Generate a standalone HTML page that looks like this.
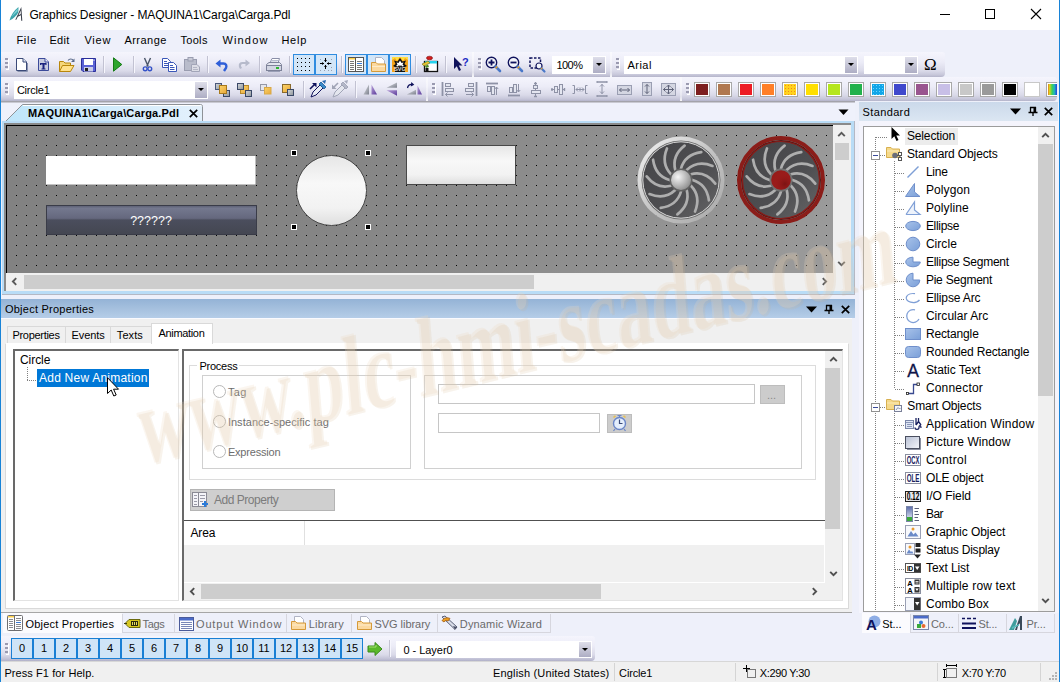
<!DOCTYPE html>
<html><head><meta charset="utf-8"><title>Graphics Designer</title>
<style>
*{box-sizing:border-box;margin:0;padding:0}
html,body{width:1061px;height:682px;overflow:hidden;background:#eef0fa;font-family:"Liberation Sans",sans-serif;font-size:11px;color:#000}
.a{position:absolute}
.t{position:absolute;white-space:nowrap;line-height:14px}
svg{position:absolute;overflow:visible}
#win{position:absolute;left:0;top:0;width:1061px;height:682px;background:#eef0fa;overflow:hidden}
#title{left:0;top:0;width:1061px;height:30px;background:#fff}
#menu{left:1px;top:30px;width:1060px;height:22px;background:#eef0fa}
.tb{background:linear-gradient(#f5f5fd 0%,#ececf7 40%,#dadae9 75%,#c6c6d9 92%,#b4b4ca 100%);border-radius:0 3px 4px 0}
.sep{position:absolute;width:2px;height:17px;background:linear-gradient(90deg,#c2c2d2 50%,#f6f6fd 50%)}
.grip{position:absolute;width:3px;height:11px;background:repeating-linear-gradient(#9a9ab0 0 2px,transparent 2px 4px);box-shadow:1px 1px 0 #fff}
.btnsel{position:absolute;width:22px;height:21px;background:#d3e6f8;border:1px solid #2f8ce0}
.combo{position:absolute;background:#fff;height:18px}
.dd{position:absolute;right:1px;top:1px;bottom:1px;width:12px;background:linear-gradient(#dedeea,#c6c6d6 50%,#adadc4)}
.dd:after{content:"";position:absolute;left:3px;top:6px;border:3px solid transparent;border-top:3.500px solid #000;border-bottom:0}
.sw{position:absolute;top:5px;width:16px;height:15px;border:1px solid #a8a8a8;background:#fff;padding:1px}
.sw i{display:block;width:100%;height:100%}
.ptab{background:#f0f0f0;border:1px solid #d9d9d9;border-bottom:0}
.pt{font-size:11px;letter-spacing:-0.35px}
.radio{width:13px;height:13px;border-radius:50%;border:1px solid #b8b8b8;background:#fff}
.rt{font-size:11px;color:#6d6d6d;letter-spacing:-0.1px}
.btab{border:1px solid #d6d6de;border-top:0;background:#eef0fa}
.bt{color:#6a6a6a}
.lb{width:22px;height:21px;border:1px solid #1a7fd4;background:#cfe4f7;text-align:center;font-size:11px;line-height:19px;font-weight:normal}
.ssep{width:1px;height:18px;background:#d4d4d4}
.tbdiv{width:2px;background:linear-gradient(rgba(255,255,255,.5),rgba(255,255,255,.35) 80%,rgba(255,255,255,.9))}
</style></head><body>
<div id="win">
<!-- TITLE BAR -->
<div id="title" class="a">
 <svg style="left:9px;top:6px" width="16" height="17" viewBox="0 0 16 17"><path d="M.5 14.500Q2.500 6.500 9.500 1L9.300 6.500Q6.500 11.500 .5 14.500Z" fill="#3aa3ab"/><path d="M2.500 11Q5 6 8.800 2.500L8.500 5.500Q5.500 8 2.500 11Z" fill="#7fd0d4"/><path d="M6.300 13.800L12.300 1L13.300 14.800L12.200 14.800L11.900 9.200L8.800 10.800L7.300 13.800ZM9.500 9.300L11.800 8L11.700 4.500Z" fill="#3a3f4a" fill-rule="evenodd"/></svg>
 <div class="t" style="letter-spacing:-0.1px;left:29.4px;top:8px;font-size:12px" id="ttl">Graphics Designer - MAQUINA1\Carga\Carga.Pdl</div>
 <svg style="left:930px;top:0" width="131" height="30" viewBox="0 0 131 30"><g stroke="#000" stroke-width="1" fill="none" shape-rendering="crispEdges"><path d="M10 14.5H20"/><rect x="55.5" y="9.5" width="9" height="9"/></g><path d="M101 9 L111 19 M111 9 L101 19" stroke="#000" stroke-width="1.1"/></svg>
</div>
<!-- MENU -->
<div id="menu" class="a" style="font-size:11px">
 <div class="t" style="letter-spacing:0.76px;left:15.4px;top:3px">File</div>
 <div class="t" style="letter-spacing:0.34px;left:48.4px;top:3px">Edit</div>
 <div class="t" style="letter-spacing:0.78px;left:83.4px;top:3px">View</div>
 <div class="t" style="letter-spacing:0.48px;left:123.4px;top:3px">Arrange</div>
 <div class="t" style="letter-spacing:0.33px;left:179.4px;top:3px">Tools</div>
 <div class="t" style="letter-spacing:1.18px;left:221.4px;top:3px">Window</div>
 <div class="t" style="letter-spacing:0.79px;left:280.4px;top:3px">Help</div>
</div>
<!-- TOOLBAR ROW 1 -->
<div class="a tb" style="left:1px;top:52px;width:944px;height:25px"></div>
<div class="a tbdiv" style="left:472px;top:52px;height:25px"></div>
<div class="a tbdiv" style="left:610px;top:52px;height:25px"></div>
<div class="a" style="left:0;top:52px;width:1061px;height:25px">
 <div class="grip" style="left:5px;top:6px"></div>
 <!-- new -->
 <svg style="left:14px;top:5px" width="16" height="16" viewBox="0 0 16 16"><path d="M2.5 1.5H9L12.5 5V13.5H2.5Z" fill="#fff" stroke="#3b4a78" stroke-width="1"/><path d="M9 1.5V5H12.5" fill="#dfe6f5" stroke="#3b4a78" stroke-width="1"/><path d="M3.5 14.5H13.5V6" fill="none" stroke="#8a93b0" stroke-width="1"/></svg>
 <!-- template -->
 <svg style="left:36px;top:5px" width="16" height="16" viewBox="0 0 16 16"><path d="M2.5 1.5H9L12.5 5V13.5H2.5Z" fill="#c9cde0" stroke="#3b4a9a" stroke-width="1"/><path d="M9 1.5V5H12.5" fill="#eef" stroke="#3b4a9a" stroke-width="1"/><path d="M4 6H10.500V8H9.500V7.500H8.500V11.500H9.500V12.500H5.500V11.500H6.500V7.500H5V8H4Z" fill="#1a237e"/></svg>
 <!-- open -->
 <svg style="left:58px;top:5px" width="17" height="16" viewBox="0 0 17 16"><path d="M1.5 14.5V4.5H5.5L7 6H12.5V8" fill="#f5d67a" stroke="#b8860b" stroke-width="1"/><path d="M1.5 14.5L4.5 8.5H16L12.5 14.5Z" fill="#ffe08a" stroke="#b8860b" stroke-width="1"/><path d="M10 3.5C11.5 1.5 14 1.5 15.5 3.5" fill="none" stroke="#5a6a8a" stroke-width="1.2"/><path d="M16.5 1.5V5H13Z" fill="#5a6a8a"/></svg>
 <!-- save -->
 <svg style="left:81px;top:5px" width="15" height="16" viewBox="0 0 15 16"><path d="M0.5 1.5H14.5V14.5H2L0.5 13Z" fill="#5b63d6" stroke="#2a2f9a" stroke-width="1"/><rect x="3" y="2" width="9" height="6" fill="#fff"/><rect x="3" y="10" width="9" height="4.5" fill="#c9cce8"/><rect x="4" y="11" width="3" height="3" fill="#222"/><rect x="12.5" y="2.5" width="1" height="1.5" fill="#dde"/></svg>
 <div class="sep" style="left:103px;top:4px"></div>
 <!-- play -->
 <svg style="left:112px;top:5px" width="12" height="16" viewBox="0 0 12 16"><path d="M1.500 .8L9.800 7.500L1.500 14.200Z" fill="#2ea52e" stroke="#157a15" stroke-width="1"/></svg>
 <div class="sep" style="left:133px;top:4px"></div>
 <!-- cut -->
 <svg style="left:141px;top:5px" width="13" height="16" viewBox="0 0 13 16"><path d="M3.500 1L7.200 9.500M9.500 1L5.800 9.500" stroke="#4a5568" stroke-width="1.400" fill="none"/><circle cx="4.200" cy="11.800" r="1.900" fill="none" stroke="#3452c8" stroke-width="1.400"/><circle cx="8.800" cy="11.800" r="1.900" fill="none" stroke="#3452c8" stroke-width="1.400"/></svg>
 <!-- copy -->
 <svg style="left:161px;top:5px" width="17" height="16" viewBox="0 0 17 16"><path d="M1.5 1.5H6.5L9.5 4.5V10.5H1.5Z" fill="#fff" stroke="#3b57b8" stroke-width="1"/><path d="M3 4.5H6M3 6.5H7.5M3 8.5H7.5" stroke="#3b57b8" stroke-width="1"/><path d="M7.5 5.5H12.5L15.5 8.5V14.5H7.5Z" fill="#fff" stroke="#3b57b8" stroke-width="1"/><path d="M9 8.5H12M9 10.5H13.5M9 12.5H13.5" stroke="#3b57b8" stroke-width="1"/></svg>
 <!-- paste (disabled) -->
 <svg style="left:184px;top:5px" width="17" height="16" viewBox="0 0 17 16"><rect x="0.5" y="2.5" width="12" height="11" fill="#b9bccb" stroke="#9a9db0"/><rect x="4" y="0.5" width="5" height="3.5" fill="#c8cad6" stroke="#9a9db0"/><path d="M7.5 7.5H13L15.5 10V14.5H7.5Z" fill="#dcdde6" stroke="#a2a5b8"/><path d="M9 10.5H13M9 12.5H14" stroke="#b4b6c6"/></svg>
 <div class="sep" style="left:207px;top:4px"></div>
 <!-- undo -->
 <svg style="left:214px;top:5px" width="16" height="16" viewBox="0 0 16 16"><path d="M4 6.5H9.5C12 6.5 13 8.5 12 11L10 14" fill="none" stroke="#2f5fd8" stroke-width="2.4"/><path d="M1.5 6.5L6.5 2.5V10.5Z" fill="#2f5fd8"/></svg>
 <!-- redo (disabled) -->
 <svg style="left:236px;top:5px" width="16" height="16" viewBox="0 0 16 16"><path d="M11 6H6.5C4.5 6 3.5 7.5 4 9.5L5 11.5" fill="none" stroke="#b6bacb" stroke-width="2.2"/><path d="M14 6L9.5 2.5V9.5Z" fill="#b6bacb"/></svg>
 <div class="sep" style="left:259px;top:4px"></div>
 <!-- print -->
 <svg style="left:266px;top:5px" width="16" height="16" viewBox="0 0 16 16"><path d="M4 6L6 1.5H13.5L12 6Z" fill="#fff" stroke="#8a8fa8"/><path d="M5.5 3.5H12M5 5H11.5" stroke="#b8bccf"/><path d="M0.5 7.5L3 5.5H13.5L15.5 7.5V12.5H0.5Z" fill="#e3e5ee" stroke="#7d8299"/><rect x="0.5" y="8.5" width="15" height="5" fill="#d2d5e2" stroke="#7d8299"/><rect x="10" y="10" width="3" height="2" fill="#2db52d"/><path d="M2 14.5H14" stroke="#9a9fb6"/></svg>
 <div class="sep" style="left:289px;top:4px"></div>
 <!-- grid (selected) -->
 <div class="btnsel" style="left:293px;top:2px"></div>
 <svg style="left:297px;top:6px" width="14" height="14" viewBox="0 0 14 14"><g fill="#000"><rect x="0" y="0" width="1" height="1"/><rect x="4" y="0" width="1" height="1"/><rect x="8" y="0" width="1" height="1"/><rect x="12" y="0" width="1" height="1"/><rect x="0" y="4" width="1" height="1"/><rect x="4" y="4" width="1" height="1"/><rect x="8" y="4" width="1" height="1"/><rect x="12" y="4" width="1" height="1"/><rect x="0" y="8" width="1" height="1"/><rect x="4" y="8" width="1" height="1"/><rect x="8" y="8" width="1" height="1"/><rect x="12" y="8" width="1" height="1"/><rect x="0" y="12" width="1" height="1"/><rect x="4" y="12" width="1" height="1"/><rect x="8" y="12" width="1" height="1"/><rect x="12" y="12" width="1" height="1"/></g></svg>
 <!-- snap (selected) -->
 <div class="btnsel" style="left:315px;top:2px"></div>
 <svg style="left:318px;top:5px" width="16" height="16" viewBox="0 0 16 16"><g fill="#98a0b0"><rect x="2" y="2" width="1" height="1"/><rect x="13" y="2" width="1" height="1"/><rect x="2" y="13" width="1" height="1"/><rect x="6" y="13" width="1" height="1"/><rect x="10" y="13" width="1" height="1"/><rect x="13" y="13" width="1" height="1"/><rect x="13" y="6" width="1" height="1"/><rect x="13" y="10" width="1" height="1"/></g><path d="M2 6.5H6M9 6.5H13M7.5 1V5M7.5 8V12" stroke="#000" stroke-width="1"/><path d="M4 5V8L6 6.5ZM11 5V8L9 6.5ZM6 3H9L7.5 5ZM6 10H9L7.5 8Z" fill="#000"/></svg>
 <div class="sep" style="left:341px;top:4px"></div>
 <!-- properties (selected) -->
 <div class="btnsel" style="left:345px;top:2px"></div>
 <svg style="left:348px;top:5px" width="16" height="15" viewBox="0 0 16 15"><rect x="0.5" y="0.5" width="15" height="14" fill="#fff" stroke="#555"/><path d="M7.5 0.5V14.5" stroke="#555"/><rect x="1" y="1" width="6" height="1.5" fill="#ffd24a"/><path d="M2 4.5H6M2 6.5H6M2 8.5H6M2 10.5H6M2 12.5H6M9 4.5H14M9 8.5H14M9 10.5H14M9 12.5H14" stroke="#777"/><path d="M9 6.5H14" stroke="#3a7bd5"/></svg>
 <!-- library (selected) -->
 <div class="btnsel" style="left:367px;top:2px"></div>
 <svg style="left:370px;top:4px" width="17" height="17" viewBox="0 0 17 17"><path d="M5.5 1.5H11.5L14.5 4.5V10.5H5.5Z" fill="#fff" stroke="#b0b4c4"/><path d="M1.5 15.5V6.5H6L7.5 8H15.5V15.5Z" fill="#fbd9a0" stroke="#d59a3a"/><path d="M2 10.5H15" stroke="#fdeccb"/></svg>
 <!-- svg lib (selected) -->
 <div class="btnsel" style="left:389px;top:2px"></div>
 <svg style="left:392px;top:5px" width="16" height="15" viewBox="0 0 16 15"><rect x="0" y="0" width="16" height="15" fill="#f5a31a"/><path d="M0 0H16V3L13 1L11 4L8 0L5 4L3 1L0 3Z" fill="#ffdf40"/><path d="M8 1L10.5 4.5L14 3.5L12.5 7L15 9L13 10V15H3V10L1 9L3.5 7L2 3.5L5.500 4.500Z" fill="#111"/><path d="M8 3.500L9.500 6L11.500 5.500L10.500 7.500L12 9L10 9.500L9 8L8 9.500L7 8L6 9.500L4 9L5.500 7.500L4.500 5.500L6.500 6Z" fill="#fff"/><text x="8" y="14" font-family="Liberation Sans,sans-serif" font-size="5.500" font-weight="bold" fill="#ddd" text-anchor="middle">SVG</text></svg>
 <div class="sep" style="left:415px;top:4px"></div>
 <!-- dynamic wizard -->
 <svg style="left:421px;top:3px" width="18" height="18" viewBox="0 0 18 18"><rect x="3.500" y="6.500" width="13" height="10" fill="#fff" stroke="#111" stroke-width="1.300"/><rect x="4" y="6" width="12" height="2.500" fill="#27d3ee"/><ellipse cx="8.500" cy="3" rx="3" ry="1.800" fill="#d31d1d" stroke="#7a0b0b" stroke-width=".6"/><path d="M1 9L7 6L9 8L3 11Z" fill="#e7c532" stroke="#6a6a1a" stroke-width=".6"/><path d="M4 11L7 9.500L8 12L5 13Z" fill="#4f8a2a"/><rect x="4.500" y="13" width="3" height="3" fill="#111"/></svg>
 <div class="sep" style="left:445px;top:4px"></div>
 <!-- help cursor -->
 <svg style="left:453px;top:4px" width="16" height="17" viewBox="0 0 16 17"><path d="M1 1V13L3.800 10.200L6 15L8 14L5.800 9.500H9.500Z" fill="#10135c"/><text x="9" y="10" font-family="Liberation Sans,sans-serif" font-size="11" font-weight="bold" fill="#1c2bc4">?</text></svg>
 <!-- zoom toolbar -->
 <div class="grip" style="left:478px;top:6px"></div>
 <svg style="left:485px;top:4px" width="17" height="17" viewBox="0 0 17 17"><circle cx="6.500" cy="6.500" r="5.200" fill="#f4f6fb" stroke="#10135c" stroke-width="1.400"/><path d="M3.500 6.500H9.500M6.500 3.500V9.500" stroke="#10135c" stroke-width="1.800"/><path d="M10.500 10.500L15 15" stroke="#4a78c8" stroke-width="2.600" stroke-linecap="round"/><path d="M10.800 10.800L12 12" stroke="#e0a030" stroke-width="2.200"/></svg>
 <svg style="left:507px;top:4px" width="17" height="17" viewBox="0 0 17 17"><circle cx="6.500" cy="6.500" r="5.200" fill="#f4f6fb" stroke="#10135c" stroke-width="1.400"/><path d="M3.500 6.500H9.500" stroke="#10135c" stroke-width="1.800"/><path d="M10.500 10.500L15 15" stroke="#4a78c8" stroke-width="2.600" stroke-linecap="round"/><path d="M10.800 10.800L12 12" stroke="#e0a030" stroke-width="2.200"/></svg>
 <svg style="left:529px;top:4px" width="17" height="17" viewBox="0 0 17 17"><rect x="1" y="2" width="10.500" height="10" fill="none" stroke="#10135c" stroke-width="1.500" stroke-dasharray="2.500 1.500"/><circle cx="10" cy="10" r="3" fill="#f4f6fb" stroke="#10135c" stroke-width="1.200"/><path d="M12.300 12.300L15.500 15.500" stroke="#4a78c8" stroke-width="2.200" stroke-linecap="round"/><path d="M12.200 12.200L13 13" stroke="#e0a030" stroke-width="1.800"/></svg>
 <div class="combo" style="left:552px;top:4px;width:54px"><div class="t" style="letter-spacing:-0.51px;left:4.4px;top:2px;font-size:11px">100%</div><div class="dd"></div></div>
 <!-- font toolbar -->
 <div class="grip" style="left:616px;top:6px"></div>
 <div class="combo" style="left:624px;top:4px;width:234px"><div class="t" style="letter-spacing:0.5px;left:3.4px;top:2px;font-size:11px">Arial</div><div class="dd"></div></div>
 <div class="combo" style="left:864px;top:4px;width:54px"><div class="dd"></div></div>
 <div class="t" style="left:924px;top:3px;font-family:'Liberation Serif',serif;font-size:17px;line-height:20px">Ω</div>
</div>
<!-- TOOLBAR ROW 2 -->
<div class="a tb" style="left:1px;top:77px;width:1056px;height:24px"></div>
<div class="a tbdiv" style="left:426px;top:77px;height:24px"></div>
<div class="a tbdiv" style="left:680px;top:77px;height:24px"></div>
<div class="a" style="left:0;top:77px;width:1061px;height:24px">
 <div class="grip" style="left:5px;top:6px"></div>
 <div class="combo" style="left:14px;top:4px;width:194px;height:18px"><div class="t" style="letter-spacing:-0.21px;left:2.9px;top:2px;font-size:11px">Circle1</div><div class="dd"></div></div>
 <!-- z-order icons -->
 <svg style="left:214px;top:4px" width="17" height="17" viewBox="0 0 17 17"><defs><linearGradient id="zg" x1="0" x2="1" y1="0" y2="1"><stop offset="0" stop-color="#d4d8dc"/><stop offset="1" stop-color="#8e9498"/></linearGradient><linearGradient id="zo" x1="0" x2="1" y1="0" y2="1"><stop offset="0" stop-color="#fbd36a"/><stop offset="1" stop-color="#e8a83a"/></linearGradient></defs><rect x="1.500" y="2.500" width="6" height="6" fill="url(#zg)" stroke="#4a587a"/><rect x="9.500" y="9.500" width="6" height="6" fill="url(#zg)" stroke="#3a4866"/><rect x="5.500" y="4.500" width="7" height="8" fill="url(#zo)" stroke="#a87a1c"/></svg>
 <svg style="left:236px;top:4px" width="17" height="17" viewBox="0 0 17 17"><rect x="4.500" y="4.500" width="8" height="8" fill="url(#zo)" stroke="#b88a2c"/><rect x="1.500" y="2.500" width="6" height="6" fill="url(#zg)" stroke="#3a4866"/><rect x="9.500" y="9.500" width="6" height="6" fill="url(#zg)" stroke="#3a4866"/></svg>
 <svg style="left:259px;top:4px" width="17" height="17" viewBox="0 0 17 17"><rect x="1.500" y="3.500" width="6" height="6" fill="#e4e6ee" stroke="#9498a8"/><rect x="5.500" y="6.500" width="6.500" height="6.500" fill="url(#zo)" stroke="#d8a848"/></svg>
 <svg style="left:281px;top:4px" width="17" height="17" viewBox="0 0 17 17"><rect x="1.500" y="3.500" width="8" height="8" fill="url(#zo)" stroke="#8a6a2c"/><rect x="6.500" y="8.500" width="6" height="6" fill="url(#zg)" stroke="#3a4866"/></svg>
 <div class="sep" style="left:303px;top:4px"></div>
 <!-- droppers -->
 <svg style="left:309px;top:3px" width="18" height="18" viewBox="0 0 18 18"><path d="M2 17L4 12L11 5L14 8L7 15Z" fill="#e8ecf4" stroke="#10135c" stroke-width="1"/><path d="M10 4L12 2L17 7L15 9Z" fill="#3a8ac8" stroke="#1a5a98" stroke-width=".8"/><path d="M13 1L17 0L16 4Z" fill="#2a6ab0"/><path d="M1 9L6 4" stroke="#10135c" stroke-width="1.600"/><path d="M3 3H7.500V7.500Z" fill="#10135c"/></svg>
 <svg style="left:331px;top:3px" width="18" height="18" viewBox="0 0 18 18"><path d="M2 17L4 12L11 5L14 8L7 15Z" fill="#e4e6ee" stroke="#a0a4b6" stroke-width="1"/><path d="M10 4L12 2L17 7L15 9Z" fill="#b4b8c8" stroke="#9a9eb2" stroke-width=".8"/><path d="M13 1L17 0L16 4Z" fill="#a8acbe"/><path d="M2 8L7 3" stroke="#a0a4b6" stroke-width="1.600"/><path d="M1 4.500V9H5.500Z" fill="#a0a4b6"/></svg>
 <div class="sep" style="left:355px;top:4px"></div>
 <!-- mirror / rotate -->
 <svg style="left:362px;top:4px" width="16" height="17" viewBox="0 0 16 17"><defs><linearGradient id="mg" x1="0" x2="1" y1="0" y2="1"><stop offset="0" stop-color="#e0e2e8"/><stop offset="1" stop-color="#7c808c"/></linearGradient><linearGradient id="mp" x1="0" x2="1" y1="0" y2="1"><stop offset="0" stop-color="#b8a0d8"/><stop offset="1" stop-color="#5a3a9a"/></linearGradient></defs><path d="M7 3.500V13.500H1.500Z" fill="url(#mg)"/><path d="M9.500 3.500V13.500H15Z" fill="url(#mp)"/></svg>
 <svg style="left:385px;top:4px" width="15" height="17" viewBox="0 0 15 17"><path d="M12 1.500V6.800H1.500Z" fill="url(#mg)"/><path d="M12 9.200H1.500L12 14.800Z" fill="url(#mp)"/></svg>
 <svg style="left:405px;top:3px" width="18" height="18" viewBox="0 0 18 18"><path d="M11 14.500H1.800L11 9.800Z" fill="url(#mg)"/><path d="M12.500 5.500V14.500H17Z" fill="url(#mp)"/><path d="M2.500 8C3 5.500 5 4.200 7.500 4.500" fill="none" stroke="#10135c" stroke-width="1.300"/><path d="M6.300 2L9.300 4.800L5.800 6.600Z" fill="#10135c"/></svg>
 <div class="grip" style="left:432px;top:6px"></div>
 <!-- align icons (disabled gray) -->

 <svg style="left:441px;top:4px" width="16" height="17" viewBox="0 0 16 17" fill="none" stroke="#8e92a6"><path d="M1.500 1V15" stroke-width="1.800"/><rect x="4.500" y="2.500" width="5" height="3" fill="#e4e6f0"/><rect x="4.500" y="7.500" width="8" height="3" fill="#e4e6f0"/><path d="M12 13.500H4.500M6.500 11.500L4.500 13.500L6.500 15.500"/></svg>
 <svg style="left:463px;top:4px" width="16" height="17" viewBox="0 0 16 17" fill="none" stroke="#8e92a6"><path d="M13.500 1V15" stroke-width="1.800"/><rect x="5.500" y="2.500" width="5" height="3" fill="#e4e6f0"/><rect x="2.500" y="7.500" width="8" height="3" fill="#e4e6f0"/><path d="M3 13.500H10.500M8.500 11.500L10.500 13.500L8.500 15.500"/></svg>
 <svg style="left:485px;top:4px" width="16" height="17" viewBox="0 0 16 17" fill="none" stroke="#8e92a6"><path d="M1 2.500H13" stroke-width="1.800"/><rect x="2.500" y="5.500" width="3" height="5" fill="#e4e6f0"/><rect x="6.500" y="5.500" width="3" height="8" fill="#e4e6f0"/><path d="M11.500 14V6M9.800 8L11.500 6L13.200 8"/></svg>
 <svg style="left:507px;top:4px" width="16" height="17" viewBox="0 0 16 17" fill="none" stroke="#8e92a6"><path d="M1 14.500H13" stroke-width="1.800"/><rect x="2.500" y="6.500" width="3" height="5" fill="#e4e6f0"/><rect x="6.500" y="3.500" width="3" height="8" fill="#e4e6f0"/><path d="M11.500 3V11M9.800 9L11.500 11L13.200 9"/></svg>
 <svg style="left:529px;top:4px" width="14" height="17" viewBox="0 0 14 17" fill="none" stroke="#8e92a6"><path d="M6.500 1V16"/><rect x="4.500" y="4.500" width="4" height="3" fill="#e4e6f0"/><rect x="2.500" y="9.500" width="9" height="3" fill="#e4e6f0"/><path d="M5 2.500H8M5 15.500H8" stroke-width="1.400"/></svg>
 <svg style="left:550px;top:4px" width="16" height="17" viewBox="0 0 16 17" fill="none" stroke="#8e92a6"><path d="M1 8.500H15"/><rect x="4.500" y="5.500" width="3" height="6" fill="#e4e6f0"/><rect x="9.500" y="3.500" width="3" height="10" fill="#e4e6f0"/><path d="M2 7V10M14.500 7V10" stroke-width="1.400"/></svg>
 <svg style="left:571px;top:4px" width="18" height="17" viewBox="0 0 18 17" fill="none" stroke="#8e92a6"><path d="M1.500 4.500H3.500V12.500H1.500M16.500 4.500H14.500V12.500H16.500"/><path d="M5 8.500H13M7 6.500L5 8.500L7 10.500M11 6.500L13 8.500L11 10.500M9 6.500V10.500"/></svg>
 <svg style="left:596px;top:3px" width="12" height="18" viewBox="0 0 12 18" fill="none" stroke="#8e92a6"><path d="M1 2H11M1 16H11" stroke-width="1.600"/><path d="M1 1V3M11 1V3M1 15V17M11 15V17"/><path d="M6 4V14M4 6.500L6 4.500L8 6.500M4 11.500L6 13.500L8 11.500"/></svg>
 <svg style="left:617px;top:8px" width="15" height="10" viewBox="0 0 15 10" fill="none" stroke="#9a9eb2"><rect x=".5" y=".5" width="14" height="9" fill="#d4d6e2"/><path d="M2.500 5H12.500M4.500 3L2.500 5L4.500 7M10.500 3L12.500 5L10.500 7" stroke="#5e6278"/></svg>
 <svg style="left:642px;top:5px" width="10" height="14" viewBox="0 0 10 14" fill="none" stroke="#9a9eb2"><rect x=".5" y=".5" width="9" height="13" fill="#d4d6e2"/><path d="M5 2.500V11.500M3 4.500L5 2.500L7 4.500M3 9.500L5 11.500L7 9.500" stroke="#5e6278"/></svg>
 <svg style="left:661px;top:6px" width="15" height="13" viewBox="0 0 15 13" fill="none" stroke="#9a9eb2"><rect x=".5" y=".5" width="14" height="12" fill="#d4d6e2"/><path d="M2.500 6.500H12.500M7.500 2V11M4.500 4.500L2.500 6.500L4.500 8.500M10.500 4.500L12.500 6.500L10.500 8.500M5.500 4L7.500 2L9.500 4M5.500 9L7.500 11L9.500 9" stroke="#5e6278"/></svg>
 <div class="grip" style="left:686px;top:6px"></div>
 <div class="sw" style="left:694px"><i style="background-color:#7d1f1f"></i></div>
 <div class="sw" style="left:716px"><i style="background-color:#b07850"></i></div>
 <div class="sw" style="left:738px"><i style="background-color:#ed1c24"></i></div>
 <div class="sw" style="left:760px"><i style="background-color:#ff7f27"></i></div>
 <div class="sw" style="left:782px"><i style="background-color:#ffd21c;background-image:radial-gradient(#f08a1c 0.7px,transparent 0.9px);background-size:3px 3px"></i></div>
 <div class="sw" style="left:804px"><i style="background-color:#ffdf00"></i></div>
 <div class="sw" style="left:826px"><i style="background-color:#b5e61d"></i></div>
 <div class="sw" style="left:848px"><i style="background-color:#22b14c"></i></div>
 <div class="sw" style="left:870px"><i style="background-color:#12a6e8;background-image:radial-gradient(#6ad4ff 0.7px,transparent 0.9px);background-size:3px 3px"></i></div>
 <div class="sw" style="left:892px"><i style="background-color:#3f48cc"></i></div>
 <div class="sw" style="left:914px"><i style="background-color:#99558f"></i></div>
 <div class="sw" style="left:936px"><i style="background-color:#c8bfe7"></i></div>
 <div class="sw" style="left:958px"><i style="background-color:#c8c8c8"></i></div>
 <div class="sw" style="left:980px"><i style="background-color:#9a9a9a"></i></div>
 <div class="sw" style="left:1002px"><i style="background-color:#000000"></i></div>
 <div class="sw" style="left:1024px;border-color:#c8c8c8"><i style="background:#ffffff"></i></div>
 <div class="a" style="left:1046px;top:5px;width:11px;height:15px;border:1px solid #a8a8a8;border-right:0;padding:1px 0 1px 1px;background:#fff"><i style="display:block;width:100%;height:100%;background:linear-gradient(90deg,#e07820,#d8d820 18%,#38d058 45%,#20b8b8 70%,#2040e0 100%)"></i></div>
</div>
<!-- DOCUMENT TAB ROW -->
<div class="a" style="left:1px;top:101px;width:854px;height:2px;background:#a3a3aa"></div>
<div class="a" style="left:1px;top:102px;width:854px;height:1px;background:#c9c9d2"></div>
<div class="a" style="left:1px;top:103px;width:854px;height:19px;background:#eff1fb"></div>
<svg style="left:0;top:103px" width="210" height="19" viewBox="0 0 210 19"><defs><linearGradient id="tabg" x1="0" x2="1" y1="0" y2="0"><stop offset="0" stop-color="#bfe6fb"/><stop offset=".6" stop-color="#d4ecfb"/><stop offset="1" stop-color="#e4f1fc"/></linearGradient></defs><path d="M5 19L22.500 1.500H200.500Q202.500 1.500 202.500 3.500V19Z" fill="url(#tabg)" stroke="#8e9297" stroke-width="1"/><path d="M23 2.500H201.500" stroke="#fff" stroke-width="1"/></svg>
<div class="t" style="letter-spacing:0.16px;left:28.0px;top:106px;font-weight:bold;font-size:11px" id="doctab">MAQUINA1\Carga\Carga.Pdl</div>
<svg style="left:189px;top:109px" width="9" height="9" viewBox="0 0 9 9"><path d="M.8.800L8.200 8.200M8.200.8L.8 8.200" stroke="#000" stroke-width="1.700"/></svg>
<svg style="left:838px;top:109px" width="11" height="7" viewBox="0 0 11 7"><path d="M.5.500H10.500L5.500 6Z" fill="#000"/></svg>
<!-- CANVAS FRAME -->
<div class="a" style="left:2px;top:121px;width:852px;height:173px;background:#b9dcf6"></div>
<div class="a" style="left:4px;top:123px;width:847px;height:168px;background:#f0f0f0"></div>
<div class="a" style="left:4px;top:123px;width:847px;height:2px;background:#8a8a8a"></div>
<div class="a" style="left:4px;top:123px;width:2px;height:168px;background:#8a8a8a"></div>
<div class="a" style="left:6px;top:125px;width:827px;height:148px;background:#000"></div>
<div class="a" style="left:2px;top:294px;width:853px;height:1px;background:#b4b8c4"></div>
<div class="a" style="left:854px;top:121px;width:1px;height:174px;background:#b4b8c4"></div>
<!-- CANVAS -->
<div class="a" id="canvas" style="left:7px;top:126px;width:826px;height:147px;background-color:#828282;background-image:linear-gradient(#000,#000);background-size:0 0;overflow:hidden">
<svg style="left:0;top:0" width="826" height="147" viewBox="7 126 826 147">
<defs>
<pattern id="dots" x="16" y="135" width="10" height="10" patternUnits="userSpaceOnUse"><rect x="0" y="0" width="1" height="1" fill="#000"/></pattern>
<linearGradient id="lite" gradientUnits="userSpaceOnUse" x1="250" y1="126" x2="833" y2="273"><stop offset="0" stop-color="#fff" stop-opacity="0"/><stop offset=".5" stop-color="#fff" stop-opacity=".09"/><stop offset="1" stop-color="#fff" stop-opacity=".2"/></linearGradient>
<linearGradient id="lg1" x1="0" x2="0" y1="0" y2="1"><stop offset="0" stop-color="#e6e6e6"/><stop offset=".4" stop-color="#f8f8f8"/><stop offset=".75" stop-color="#f2f2f2"/><stop offset="1" stop-color="#dedede"/></linearGradient>
<linearGradient id="btn" x1="0" x2="0" y1="0" y2="1"><stop offset="0" stop-color="#5a5d72"/><stop offset=".1" stop-color="#74788e"/><stop offset=".44" stop-color="#65687e"/><stop offset=".5" stop-color="#4b4e5d"/><stop offset="1" stop-color="#444651"/></linearGradient>
<linearGradient id="ringa" x1="0" x2="1" y1="0" y2="1"><stop offset="0" stop-color="#f4f4f4"/><stop offset=".5" stop-color="#c4c4c4"/><stop offset="1" stop-color="#a8a8a8"/></linearGradient>
<linearGradient id="disca" x1="0" x2="1" y1="0" y2="1"><stop offset="0" stop-color="#454548"/><stop offset=".6" stop-color="#4e4e51"/><stop offset="1" stop-color="#666667"/></linearGradient>
<linearGradient id="discb" x1="0" x2="1" y1="0" y2="1"><stop offset="0" stop-color="#454548"/><stop offset=".6" stop-color="#4e4e51"/><stop offset="1" stop-color="#666667"/></linearGradient>
<radialGradient id="huba" cx=".35" cy=".35" r=".8"><stop offset="0" stop-color="#f6f6f6"/><stop offset=".5" stop-color="#bcbcbc"/><stop offset="1" stop-color="#808080"/></radialGradient>
<radialGradient id="hubr" cx=".7" cy=".7" r=".7"><stop offset="0" stop-color="#701010" stop-opacity=".7"/><stop offset="1" stop-color="#c02020" stop-opacity="0"/></radialGradient>
</defs>
<rect x="7" y="126" width="826" height="147" fill="url(#lite)"/>
<rect x="7" y="126" width="826" height="147" fill="url(#dots)"/>
<rect x="46" y="156" width="209.500" height="28.500" fill="#fff"/>
<rect x="46.500" y="205.500" width="210" height="29" fill="url(#btn)" stroke="#3a3c48" stroke-width="1"/>
<text x="151" y="224.500" font-family="Liberation Sans,sans-serif" font-size="12.500" fill="#fff" text-anchor="middle">??????</text>
<circle cx="331.500" cy="190.500" r="35" fill="url(#lg1)" stroke="#484848" stroke-width="1"/>
<g shape-rendering="crispEdges"><g fill="#fff"><rect x="291" y="150" width="6" height="6"/><rect x="365" y="150" width="6" height="6"/><rect x="291" y="224" width="6" height="6"/><rect x="365" y="224" width="6" height="6"/></g><g fill="#000"><rect x="292" y="151" width="4" height="4"/><rect x="366" y="151" width="4" height="4"/><rect x="292" y="225" width="4" height="4"/><rect x="366" y="225" width="4" height="4"/></g></g>
<rect x="406.500" y="145.500" width="109" height="39" fill="url(#lg1)" stroke="#484848" stroke-width="1"/>
<g transform="translate(681,180)">
<circle r="43.5" fill="url(#ringa)"/>
<circle r="39.500" fill="#6a6a6a"/>
<circle r="38.200" fill="url(#disca)" stroke="#d8d8d8" stroke-width="1"/>
<path d="M11.50 0.00Q25.68 4.07 27.91 20.28" fill="none" stroke="#aeaeae" stroke-width="2.700" stroke-linecap="round"/>
<path d="M9.96 5.75Q20.21 16.36 14.03 31.52" fill="none" stroke="#aeaeae" stroke-width="2.700" stroke-linecap="round"/>
<path d="M5.75 9.96Q9.32 24.27 -3.61 34.31" fill="none" stroke="#aeaeae" stroke-width="2.700" stroke-linecap="round"/>
<path d="M0.00 11.50Q-4.07 25.68 -20.28 27.91" fill="none" stroke="#aeaeae" stroke-width="2.700" stroke-linecap="round"/>
<path d="M-5.75 9.96Q-16.36 20.21 -31.52 14.03" fill="none" stroke="#aeaeae" stroke-width="2.700" stroke-linecap="round"/>
<path d="M-9.96 5.75Q-24.27 9.32 -34.31 -3.61" fill="none" stroke="#aeaeae" stroke-width="2.700" stroke-linecap="round"/>
<path d="M-11.50 0.00Q-25.68 -4.07 -27.91 -20.28" fill="none" stroke="#aeaeae" stroke-width="2.700" stroke-linecap="round"/>
<path d="M-9.96 -5.75Q-20.21 -16.36 -14.03 -31.52" fill="none" stroke="#aeaeae" stroke-width="2.700" stroke-linecap="round"/>
<path d="M-5.75 -9.96Q-9.32 -24.27 3.61 -34.31" fill="none" stroke="#aeaeae" stroke-width="2.700" stroke-linecap="round"/>
<path d="M-0.00 -11.50Q4.07 -25.68 20.28 -27.91" fill="none" stroke="#aeaeae" stroke-width="2.700" stroke-linecap="round"/>
<path d="M5.75 -9.96Q16.36 -20.21 31.52 -14.03" fill="none" stroke="#aeaeae" stroke-width="2.700" stroke-linecap="round"/>
<path d="M9.96 -5.75Q24.27 -9.32 34.31 3.61" fill="none" stroke="#aeaeae" stroke-width="2.700" stroke-linecap="round"/>
<circle r="11.500" fill="#606060"/>
<circle r="10" fill="url(#huba)"/>
</g>
<g transform="translate(781,180)">
<circle r="42" fill="none" stroke="#8b1d19" stroke-width="4"/>
<circle r="40" fill="#571614"/>
<circle r="38.500" fill="url(#discb)" stroke="#8b1d19" stroke-width="1.200"/>
<path d="M11.50 0.00Q25.68 4.07 27.91 20.28" fill="none" stroke="#aeaeae" stroke-width="2.700" stroke-linecap="round"/>
<path d="M9.96 5.75Q20.21 16.36 14.03 31.52" fill="none" stroke="#aeaeae" stroke-width="2.700" stroke-linecap="round"/>
<path d="M5.75 9.96Q9.32 24.27 -3.61 34.31" fill="none" stroke="#aeaeae" stroke-width="2.700" stroke-linecap="round"/>
<path d="M0.00 11.50Q-4.07 25.68 -20.28 27.91" fill="none" stroke="#aeaeae" stroke-width="2.700" stroke-linecap="round"/>
<path d="M-5.75 9.96Q-16.36 20.21 -31.52 14.03" fill="none" stroke="#aeaeae" stroke-width="2.700" stroke-linecap="round"/>
<path d="M-9.96 5.75Q-24.27 9.32 -34.31 -3.61" fill="none" stroke="#aeaeae" stroke-width="2.700" stroke-linecap="round"/>
<path d="M-11.50 0.00Q-25.68 -4.07 -27.91 -20.28" fill="none" stroke="#aeaeae" stroke-width="2.700" stroke-linecap="round"/>
<path d="M-9.96 -5.75Q-20.21 -16.36 -14.03 -31.52" fill="none" stroke="#aeaeae" stroke-width="2.700" stroke-linecap="round"/>
<path d="M-5.75 -9.96Q-9.32 -24.27 3.61 -34.31" fill="none" stroke="#aeaeae" stroke-width="2.700" stroke-linecap="round"/>
<path d="M-0.00 -11.50Q4.07 -25.68 20.28 -27.91" fill="none" stroke="#aeaeae" stroke-width="2.700" stroke-linecap="round"/>
<path d="M5.75 -9.96Q16.36 -20.21 31.52 -14.03" fill="none" stroke="#aeaeae" stroke-width="2.700" stroke-linecap="round"/>
<path d="M9.96 -5.75Q24.27 -9.32 34.31 3.61" fill="none" stroke="#aeaeae" stroke-width="2.700" stroke-linecap="round"/>
<circle r="11.500" fill="#707070"/>
<circle r="9.800" fill="#961c1a"/>
<circle r="9.800" fill="url(#hubr)"/>
</g>
</svg>
</div>
<!-- canvas scrollbars -->
<div class="a" style="left:833px;top:126px;width:17px;height:147px;background:#f0f0f0"></div>
<div class="a" style="left:835px;top:143px;width:14px;height:17px;background:#cdcdcd"></div>
<svg style="left:837px;top:131px" width="9" height="6" viewBox="0 0 9 6"><path d="M1.200 5.200L4.500 1.900L7.800 5.200" fill="none" stroke="#5a5a5a" stroke-width="1.900"/></svg>
<svg style="left:837px;top:261px" width="9" height="6" viewBox="0 0 9 6"><path d="M1.200 .8L4.500 4.100L7.800 .8" fill="none" stroke="#5a5a5a" stroke-width="1.900"/></svg>
<div class="a" style="left:7px;top:273px;width:843px;height:17px;background:#f0f0f0"></div>
<div class="a" style="left:24px;top:275px;width:510px;height:14px;background:#cdcdcd"></div>
<svg style="left:11px;top:277px" width="6" height="9" viewBox="0 0 6 9"><path d="M5.200 1.200L1.900 4.500L5.200 7.800" fill="none" stroke="#5a5a5a" stroke-width="1.900"/></svg>
<svg style="left:822px;top:277px" width="6" height="9" viewBox="0 0 6 9"><path d="M.8 1.200L4.100 4.500L.8 7.800" fill="none" stroke="#5a5a5a" stroke-width="1.900"/></svg>
<!-- OBJECT PROPERTIES PANEL -->
<div class="a" style="left:1px;top:299px;width:854px;height:19px;background:linear-gradient(#94b3d6 0%,#a5c0de 50%,#b5cde8 100%)"></div>
<div class="t" style="letter-spacing:0.25px;left:4.9px;top:302px;font-size:11px" id="ophdr">Object Properties</div>
<svg style="left:805px;top:305px" width="46" height="9" viewBox="0 0 46 9"><path d="M1 1.500H12L6.500 7.500Z" fill="#000"/><path d="M21.500 0V5.500M26.500 0V5.500M21 .5H27M19.500 5.500H28.500M24 5.500V9" fill="none" stroke="#000" stroke-width="1.300"/><rect x="24.500" y="1" width="1.500" height="4" fill="#000"/><path d="M36.800.8L44.200 8.200M44.200.8L36.800 8.200" stroke="#000" stroke-width="1.700"/></svg>
<div class="a" style="left:1px;top:318px;width:851px;height:295px;background:#f0f0f0;border-bottom:1px solid #a6a6a6"></div>
<div class="a" style="left:1px;top:318px;width:851px;height:1px;background:#fafafe"></div>
<!-- tab page -->
<div class="a" style="left:5px;top:343px;width:844px;height:266px;background:#fff;border:1px solid #d9d9d9;border-top-color:#fff"></div>
<!-- tabs -->
<div class="a ptab" style="left:7px;top:326px;width:59px;height:17px"></div>
<div class="a ptab" style="left:65px;top:326px;width:46px;height:17px"></div>
<div class="a ptab" style="left:110px;top:326px;width:42px;height:17px"></div>
<div class="a" style="left:151px;top:323px;width:62px;height:21px;background:#fff;border:1px solid #d9d9d9;border-bottom:0"></div>
<div class="t pt" style="letter-spacing:-0.29px;left:12.4px;top:328px">Properties</div>
<div class="t pt" style="letter-spacing:-0.05px;left:71.4px;top:328px">Events</div>
<div class="t pt" style="letter-spacing:0.1px;left:116.8px;top:328px">Texts</div>
<div class="t pt" style="letter-spacing:-0.33px;left:158.5px;top:326px">Animation</div>
<!-- tree box -->
<div class="a" style="left:13px;top:349px;width:166px;height:252px;background:#fff;border:1px solid #e3e3e3;border-top:2px solid #696969;border-left:2px solid #696969"></div>
<div class="t" style="letter-spacing:-0.03px;left:19.9px;top:353px;font-size:12px">Circle</div>
<svg style="left:27px;top:367px" width="10" height="15" viewBox="0 0 10 15"><path d="M.5 0V13.500M0 13.500H10" fill="none" stroke="#808080" stroke-width="1" stroke-dasharray="1 1"/></svg>
<div class="a" style="left:37px;top:369px;width:112px;height:18px;background:#0078d7"></div>
<div class="t" style="letter-spacing:0.23px;left:39.0px;top:371px;font-size:12px;color:#fff" id="addnew">Add New Animation</div>
<!-- content panel -->
<div class="a" style="left:182px;top:349px;width:661px;height:252px;background:#fff;border:1px solid #e3e3e3;border-top:2px solid #696969;border-left:2px solid #696969"></div>
<!-- process group -->
<div class="a" style="left:189px;top:365px;width:627px;height:115px;border:1px solid #dcdcdc"></div>
<div class="t" style="letter-spacing:-0.24px;left:197.4px;top:359px;background:#fff;padding:0 2px;font-size:11px" id="proc">Process</div>
<div class="a" style="left:202px;top:375px;width:209px;height:94px;border:1px solid #d0d0d0"></div>
<div class="a" style="left:424px;top:375px;width:378px;height:94px;border:1px solid #d0d0d0"></div>
<div class="a radio" style="left:213px;top:385px"></div>
<div class="a radio" style="left:213px;top:415px"></div>
<div class="a radio" style="left:213px;top:445px"></div>
<div class="t rt" style="letter-spacing:0.28px;left:228.1px;top:385px">Tag</div>
<div class="t rt" style="letter-spacing:0.03px;left:227.9px;top:415px">Instance-specific tag</div>
<div class="t rt" style="letter-spacing:-0.19px;left:227.9px;top:445px">Expression</div>
<div class="a" style="left:438px;top:384px;width:317px;height:20px;background:#fff;border:1px solid #c6c6c6"></div>
<div class="a" style="left:760px;top:385px;width:25px;height:19px;background:#cccccc;border:1px solid #bdbdbd"></div>
<div class="t" style="left:767px;top:388px;color:#8a8a8a;font-size:11px">...</div>
<div class="a" style="left:438px;top:413px;width:162px;height:20px;background:#fff;border:1px solid #c6c6c6"></div>
<div class="a" style="left:607px;top:414px;width:25px;height:19px;background:#cccccc;border:1px solid #bdbdbd"></div>
<svg style="left:611px;top:414px" width="17" height="18" viewBox="0 0 17 18"><circle cx="8.500" cy="9.500" r="6" fill="#e4eefc" stroke="#6a86c8" stroke-width="1.400"/><path d="M8.500 5.500V9.500H11.500" fill="none" stroke="#3a4a78" stroke-width="1.200"/><path d="M6.500 1.500H10.500M8.500 1.500V3.500" stroke="#6a86c8" stroke-width="1.200"/><path d="M2.500 3.500L4.500 1.800M14.500 3.500L12.500 1.800" stroke="#e8c050" stroke-width="1.600"/><path d="M4 15L2.500 17M13 15L14.500 17" stroke="#6a86c8" stroke-width="1.200"/></svg>
<!-- add property -->
<div class="a" style="left:190px;top:489px;width:145px;height:22px;background:#cfcfcf;border:1px solid #b4b4b4"></div>
<svg style="left:192px;top:492px" width="17" height="16" viewBox="0 0 17 16"><rect x=".5" y=".5" width="14" height="14" fill="#f4f4f8" stroke="#8a8a94"/><path d="M6.500 .5V14.500" stroke="#8a8a94"/><path d="M2 3.500H5M2 6.500H5M2 9.500H5M2 12.500H5M8 3.500H13M8 6.500H13M8 9.500H11" stroke="#9a9aa8"/><path d="M13 9V15M10 12H16" stroke="#2a7ad8" stroke-width="2"/></svg>
<div class="t" style="letter-spacing:-0.46px;left:213.9px;top:493px;font-size:12px;color:#7c7c7c" id="addprop">Add Property</div>
<!-- grid -->
<div class="a" style="left:184px;top:520px;width:641px;height:1px;background:#505050"></div>
<div class="a" style="left:184px;top:545px;width:640px;height:37px;background:#f0f0f0"></div>
<div class="a" style="left:304px;top:521px;width:1px;height:24px;background:#e0e0e0"></div>
<div class="t" style="letter-spacing:-0.12px;left:190.4px;top:526px;font-size:12px">Area</div>
<!-- content scrollbars -->
<div class="a" style="left:825px;top:351px;width:17px;height:232px;background:#f0f0f0"></div>
<div class="a" style="left:825px;top:368px;width:15px;height:161px;background:#cdcdcd"></div>
<svg style="left:829px;top:356px" width="9" height="6" viewBox="0 0 9 6"><path d="M1.200 5.200L4.500 1.900L7.800 5.200" fill="none" stroke="#505050" stroke-width="1.900"/></svg>
<svg style="left:829px;top:571px" width="9" height="6" viewBox="0 0 9 6"><path d="M1.200 .8L4.500 4.100L7.800 .8" fill="none" stroke="#505050" stroke-width="1.900"/></svg>
<div class="a" style="left:184px;top:583px;width:658px;height:17px;background:#f0f0f0"></div>
<div class="a" style="left:201px;top:584px;width:400px;height:15px;background:#cdcdcd"></div>
<svg style="left:189px;top:587px" width="6" height="9" viewBox="0 0 6 9"><path d="M5.200 1.200L1.900 4.500L5.200 7.800" fill="none" stroke="#505050" stroke-width="1.900"/></svg>
<svg style="left:812px;top:587px" width="6" height="9" viewBox="0 0 6 9"><path d="M.8 1.200L4.100 4.500L.8 7.800" fill="none" stroke="#505050" stroke-width="1.900"/></svg>
<!-- mouse cursor -->
<svg style="left:107px;top:377px" width="13" height="20" viewBox="0 0 13 20"><path d="M.5.700V16.500L4.200 13L6.800 19L9.200 18L6.600 12.200H11.500Z" fill="#fff" stroke="#000" stroke-width="1"/></svg>
<!-- BOTTOM TABS -->
<div class="a" style="left:3px;top:613px;width:119px;height:20px;background:#fbfbfe"></div>
<svg style="left:7px;top:615px" width="16" height="16" viewBox="0 0 16 16"><rect x=".5" y=".5" width="15" height="15" rx="1" fill="#fff" stroke="#6e6e72"/><path d="M7.500 .5V15.500" stroke="#6e6e72"/><rect x="1" y="1" width="6" height="1.500" fill="#ffd24a"/><path d="M2 4.500H6M2 6.500H6M2 8.500H6M2 10.500H6M2 12.500H6M9 3.500H14M9 5.500H14M9 9.500H14M9 11.500H14M9 13.500H14" stroke="#8a8a90"/><path d="M9 7.500H14" stroke="#3a7bd5"/></svg>
<div class="t" style="letter-spacing:0.22px;left:25.4px;top:617px" id="bt1">Object Properties</div>
<div class="a btab" style="left:122px;top:614px;width:53px;height:19px"></div>
<svg style="left:124px;top:618px" width="17" height="11" viewBox="0 0 17 11"><path d="M1 5.500L5 1.500H16V9.500H5Z" fill="#d8c820" stroke="#6a6a10" stroke-width="1"/><path d="M0 5.500H3" stroke="#3a3a10" stroke-width="1"/><rect x="7" y="3" width="7" height="5" fill="#2a2a10"/><path d="M8.500 4V7M10.500 4V7M12.500 4V7" stroke="#e8e060" stroke-width="1"/></svg>
<div class="t bt" style="letter-spacing:-0.32px;left:142.6px;top:617px">Tags</div>
<div class="a btab" style="left:174px;top:614px;width:113px;height:19px"></div>
<svg style="left:179px;top:617px" width="15" height="14" viewBox="0 0 15 14"><rect x=".5" y=".5" width="14" height="13" fill="#fff" stroke="#4a5a9a"/><rect x="1" y="1" width="13" height="2.500" fill="#4a6ac8"/><path d="M2 5.500H13M2 7.500H13M2 9.500H13M2 11.500H13" stroke="#7a88b8"/></svg>
<div class="t bt" style="letter-spacing:0.85px;left:196.0px;top:617px">Output Window</div>
<div class="a btab" style="left:286px;top:614px;width:66px;height:19px"></div>
<svg style="left:290px;top:615px" width="17" height="16" viewBox="0 0 17 16"><path d="M4.500 1.500H10.500L13.500 4.500V9.500H4.500Z" fill="#fff" stroke="#b0b4c4"/><path d="M1.500 14.500V6.500H5.500L7 8H15.500V14.500Z" fill="#fbd9a0" stroke="#d59a3a"/><path d="M2 10H15" stroke="#fdeccb"/></svg>
<div class="t bt" style="letter-spacing:0.23px;left:308.7px;top:617px">Library</div>
<div class="a btab" style="left:351px;top:614px;width:87px;height:19px"></div>
<svg style="left:356px;top:615px" width="17" height="16" viewBox="0 0 17 16"><path d="M4.500 1.500H10.500L13.500 4.500V9.500H4.500Z" fill="#fff" stroke="#b0b4c4"/><path d="M1.500 14.500V6.500H5.500L7 8H15.500V14.500Z" fill="#fbd9a0" stroke="#d59a3a"/><path d="M2 10H15" stroke="#fdeccb"/></svg>
<div class="t bt" style="letter-spacing:-0.03px;left:374.4px;top:617px">SVG library</div>
<div class="a btab" style="left:437px;top:614px;width:114px;height:19px"></div>
<svg style="left:441px;top:615px" width="18" height="16" viewBox="0 0 18 16"><path d="M1 2L4 1L16 12L14 14.500Z" fill="#d8dce8" stroke="#5a6078" stroke-width="1"/><path d="M1 5.500C3 3 6 2 9 3.500L7 6C5.500 5 4 5.500 3 7Z" fill="#f0a020" stroke="#a05a10" stroke-width=".8"/><path d="M12 11L16 12L14 14.500Z" fill="#4a5068"/></svg>
<div class="t bt" style="letter-spacing:0.16px;left:459.8px;top:617px">Dynamic Wizard</div>
<!-- LAYER TOOLBAR -->
<div class="a tb" style="left:1px;top:636px;width:594px;height:25px;background:linear-gradient(#f5f5fd 0%,#ececf7 40%,#dadae9 75%,#c2c2d6 92%,#b0b0c8 100%)"></div>
<div class="grip" style="left:5px;top:643px"></div>
<div class="a lb" style="top:638px;left:11px">0</div>
<div class="a lb" style="top:638px;left:33px">1</div>
<div class="a lb" style="top:638px;left:55px">2</div>
<div class="a lb" style="top:638px;left:77px">3</div>
<div class="a lb" style="top:638px;left:99px">4</div>
<div class="a lb" style="top:638px;left:121px">5</div>
<div class="a lb" style="top:638px;left:143px">6</div>
<div class="a lb" style="top:638px;left:165px">7</div>
<div class="a lb" style="top:638px;left:187px">8</div>
<div class="a lb" style="top:638px;left:209px">9</div>
<div class="a lb" style="top:638px;left:231px">10</div>
<div class="a lb" style="top:638px;left:253px">11</div>
<div class="a lb" style="top:638px;left:275px">12</div>
<div class="a lb" style="top:638px;left:297px">13</div>
<div class="a lb" style="top:638px;left:319px">14</div>
<div class="a lb" style="top:638px;left:341px">15</div>
<svg style="left:367px;top:641px" width="16" height="16" viewBox="0 0 16 16"><path d="M1 5H8V1.500L15 8L8 14.500V11H1Z" fill="#5ab82a" stroke="#3a8a1a" stroke-width="1"/><path d="M2 6H9V4" fill="none" stroke="#a4e070" stroke-width="1"/></svg>
<div class="sep" style="left:389px;top:640px"></div>
<div class="combo" style="left:396px;top:641px;width:196px;height:17px"><div class="t" style="letter-spacing:-0.03px;left:7.4px;top:2px">0 - Layer0</div><div class="dd"></div></div>
<!-- STATUS BAR -->
<div class="a" style="left:1px;top:661px;width:1060px;height:21px;background:#f0f0f0;border-top:1px solid #d7d7d7"></div>
<div class="t" style="letter-spacing:0.08px;left:4.4px;top:666px" id="st1">Press F1 for Help.</div>
<div class="t" style="letter-spacing:0.17px;left:493.0px;top:666px" id="st2">English (United States)</div>
<div class="a ssep" style="left:614px;top:663px"></div>
<div class="t" style="letter-spacing:-0.16px;left:619.1px;top:666px">Circle1</div>
<div class="a ssep" style="left:735px;top:663px"></div>
<svg style="left:743px;top:665px" width="14" height="14" viewBox="0 0 14 14"><path d="M3.500 0V7M0 3.500H7" stroke="#000" stroke-width="1"/><rect x="4.500" y="4.500" width="8" height="8" fill="none" stroke="#000" stroke-width="1" stroke-dasharray="1 1"/></svg>
<div class="t" style="letter-spacing:-0.36px;left:759.8px;top:666px;font-size:11px">X:290 Y:30</div>
<div class="a ssep" style="left:937px;top:663px"></div>
<svg style="left:943px;top:664px" width="15" height="15" viewBox="0 0 15 15"><rect x="3.500" y="4.500" width="10" height="9" fill="none" stroke="#000" stroke-width="1" stroke-dasharray="1 1"/><path d="M3 1.500H14M3.500 0V3M13.500 0V3M1.500 5V14M0 5.500H3M0 13.500H3" stroke="#000" stroke-width="1"/></svg>
<div class="t" style="letter-spacing:-0.39px;left:961.7px;top:666px;font-size:11px">X:70 Y:70</div>
<div class="a ssep" style="left:1040px;top:663px"></div>
<svg style="left:1048px;top:671px" width="10" height="10" viewBox="0 0 10 10"><g fill="#b4b4b4"><rect x="7" y="1" width="2" height="2"/><rect x="4" y="4" width="2" height="2"/><rect x="7" y="4" width="2" height="2"/><rect x="1" y="7" width="2" height="2"/><rect x="4" y="7" width="2" height="2"/><rect x="7" y="7" width="2" height="2"/></g></svg>
<!-- RIGHT PANEL -->
<svg width="0" height="0" style="left:0;top:0"><defs>
<linearGradient id="ib" x1="0" x2="1" y1="0" y2="1"><stop offset="0" stop-color="#a9c3ea"/><stop offset="1" stop-color="#7a9fd8"/></linearGradient>
<linearGradient id="ipw" x1="0" x2="1" y1="0" y2="1"><stop offset="0" stop-color="#b8c0d4"/><stop offset="1" stop-color="#f4f6fb"/></linearGradient>
<linearGradient id="ibar" x1="0" x2="0" y1="0" y2="1"><stop offset="0" stop-color="#5a6aa8"/><stop offset=".7" stop-color="#c8d0e8"/></linearGradient>
</defs></svg>
<div class="a" style="left:859px;top:103px;width:200px;height:510px;background:#f4f4fc"></div>
<div class="a" style="left:859px;top:102px;width:199px;height:19px;background:linear-gradient(#cbd9ea,#dbe6f2)"></div>
<div class="t" style="letter-spacing:0.36px;left:862.6px;top:105px" id="rhdr">Standard</div>
<svg style="left:1010px;top:107px" width="46" height="9" viewBox="0 0 46 9"><path d="M0 1.500H11L5.500 7.500Z" fill="#000"/><path d="M20.500 0V5.500M25.500 0V5.500M20 .5H26M18.500 5.500H27.500M23 5.500V9" fill="none" stroke="#000" stroke-width="1.300"/><rect x="23.500" y="1" width="1.500" height="4" fill="#000"/><path d="M34.800.8L42.200 8.200M42.200.8L34.800 8.200" stroke="#000" stroke-width="1.700"/></svg>
<div class="a" style="left:863px;top:126px;width:192px;height:486px;background:#fff;border:1px solid #9c9c9c"></div>
<div class="a" id="rtree" style="left:864px;top:127px;width:174px;height:484px;overflow:hidden;letter-spacing:-0.15px;font-size:12px"><div class="a" style="left:0;top:1px;width:174px;height:482px">
<div class="a" style="left:41px;top:0;width:53px;height:17px;background:#ececec"></div>
<svg style="left:0;top:-1px" width="174" height="482" viewBox="864 127 174 482"><g fill="none" stroke="#808080" stroke-width="1" stroke-dasharray="1 1" shape-rendering="crispEdges">
<path d="M875.500 137V612"/><path d="M876 137.500H888"/><path d="M880 155.500H887"/><path d="M880 407.500H887"/>
<path d="M894.500 161V389"/><path d="M894.500 413V612"/>
<path d="M895 173.5H905"/><path d="M895 191.5H905"/><path d="M895 209.5H905"/><path d="M895 227.5H905"/><path d="M895 245.5H905"/><path d="M895 263.5H905"/><path d="M895 281.5H905"/><path d="M895 299.5H905"/><path d="M895 317.5H905"/><path d="M895 335.5H905"/><path d="M895 353.5H905"/><path d="M895 371.5H905"/><path d="M895 389.5H905"/><path d="M895 425.5H905"/><path d="M895 443.5H905"/><path d="M895 461.5H905"/><path d="M895 479.5H905"/><path d="M895 497.5H905"/><path d="M895 515.5H905"/><path d="M895 533.5H905"/><path d="M895 551.5H905"/><path d="M895 569.5H905"/><path d="M895 587.5H905"/><path d="M895 605.5H905"/>
</g>
<g shape-rendering="crispEdges"><rect x="871.500" y="151.500" width="8" height="8" fill="#fff" stroke="#919191"/><path d="M873 155.500H878" stroke="#3a4a9a"/><rect x="871.500" y="403.500" width="8" height="8" fill="#fff" stroke="#919191"/><path d="M873 407.500H878" stroke="#3a4a9a"/></g>
</svg>
<svg style="left:27px;top:-1px" width="10" height="15" viewBox="0 0 10 15"><path d="M.5 0V12L3.300 9.300L5.500 14L7.500 13L5.300 8.500H9Z" fill="#000"/></svg>
<div class="t" style="letter-spacing:-0.16px;left:43.0px;top:1px">Selection</div>
<svg style="left:22px;top:18px" width="17" height="15" viewBox="0 0 17 15"><path d="M.5 11.500V1.500H5L6.500 3H13.500V11.500Z" fill="#f5d98a" stroke="#d8b050"/><path d="M1 5H13" stroke="#fbeab8"/><circle cx="9" cy="9.500" r="2.800" fill="#6a6e7a"/><rect x="12.500" y="6.500" width="3" height="3" fill="#fff" stroke="#555"/><rect x="12.500" y="11.500" width="3" height="3" fill="#fff" stroke="#555"/><path d="M11 9.500H14V11.500" fill="none" stroke="#555"/></svg>
<div class="t" style="letter-spacing:-0.13px;left:43.0px;top:19px">Standard Objects</div>
<svg style="left:41px;top:36px" width="16" height="16" viewBox="0 0 16 16"><path d="M2.500 13.500L13.500 2.500" stroke="#7f9fd6" stroke-width="1.500"/></svg>
<div class="t" style="letter-spacing:-0.2px;left:61.9px;top:37px">Line</div>
<svg style="left:41px;top:54px" width="16" height="16" viewBox="0 0 16 16"><path d="M.5 14.500L9.500 1.500V10L15 14.500Z" fill="url(#ib)" stroke="#6f8fcb" stroke-width="1"/></svg>
<div class="t" style="letter-spacing:0.12px;left:61.9px;top:55px">Polygon</div>
<svg style="left:41px;top:72px" width="16" height="16" viewBox="0 0 16 16"><path d="M1 14.500L9.500 2V10L15 14.500H1" fill="#eef3fb" stroke="#7f9fd6" stroke-width="1.200"/></svg>
<div class="t" style="letter-spacing:0.11px;left:61.9px;top:73px">Polyline</div>
<svg style="left:41px;top:90px" width="16" height="16" viewBox="0 0 16 16"><ellipse cx="8" cy="8" rx="7.300" ry="4.600" fill="url(#ib)" stroke="#6f8fcb" stroke-width="1"/></svg>
<div class="t" style="letter-spacing:-0.31px;left:61.9px;top:91px">Ellipse</div>
<svg style="left:41px;top:108px" width="16" height="16" viewBox="0 0 16 16"><circle cx="8" cy="8" r="6.800" fill="url(#ib)" stroke="#6f8fcb" stroke-width="1"/></svg>
<div class="t" style="letter-spacing:0.05px;left:61.9px;top:109px">Circle</div>
<svg style="left:41px;top:126px" width="16" height="16" viewBox="0 0 16 16"><path d="M8 8H15.300A7.300 4.800 0 1 1 8 3.200Z" fill="url(#ib)" stroke="#6f8fcb" stroke-width="1"/></svg>
<div class="t" style="letter-spacing:-0.25px;left:61.9px;top:127px">Ellipse Segment</div>
<svg style="left:41px;top:144px" width="16" height="16" viewBox="0 0 16 16"><path d="M8 8H14.800A6.800 6.800 0 1 1 8 1.200Z" fill="url(#ib)" stroke="#6f8fcb" stroke-width="1"/></svg>
<div class="t" style="letter-spacing:-0.22px;left:61.9px;top:145px">Pie Segment</div>
<svg style="left:41px;top:162px" width="16" height="16" viewBox="0 0 16 16"><path d="M14.500 10A7 4.500 0 1 1 10 3.700" fill="none" stroke="#7f9fd6" stroke-width="1.300"/></svg>
<div class="t" style="letter-spacing:-0.13px;left:61.9px;top:163px">Ellipse Arc</div>
<svg style="left:41px;top:180px" width="16" height="16" viewBox="0 0 16 16"><path d="M14 11A6.500 6.500 0 1 1 10 1.800" fill="none" stroke="#7f9fd6" stroke-width="1.300"/></svg>
<div class="t" style="letter-spacing:0.04px;left:61.9px;top:181px">Circular Arc</div>
<svg style="left:41px;top:198px" width="16" height="16" viewBox="0 0 16 16"><rect x=".5" y="2.500" width="15" height="11" fill="url(#ib)" stroke="#6f8fcb" stroke-width="1"/></svg>
<div class="t" style="letter-spacing:-0.14px;left:61.9px;top:199px">Rectangle</div>
<svg style="left:41px;top:216px" width="16" height="16" viewBox="0 0 16 16"><rect x=".5" y="2.500" width="15" height="11" rx="3" fill="url(#ib)" stroke="#6f8fcb" stroke-width="1"/></svg>
<div class="t" style="letter-spacing:-0.16px;left:61.9px;top:217px">Rounded Rectangle</div>
<svg style="left:41px;top:234px" width="16" height="16" viewBox="0 0 16 16"><text x="8" y="14.500" font-family="Liberation Sans,sans-serif" font-size="17.500" fill="#10164a" stroke="#10164a" stroke-width=".3" text-anchor="middle">A</text></svg>
<div class="t" style="letter-spacing:-0.04px;left:61.9px;top:235px">Static Text</div>
<svg style="left:41px;top:252px" width="16" height="16" viewBox="0 0 16 16"><path d="M3 13.500H8.500V4.500H12" fill="none" stroke="#3a4a90" stroke-width="1.300"/><rect x="1.500" y="12.500" width="2" height="2" fill="#fff" stroke="#222" stroke-width=".8"/><rect x="12" y="3" width="2.500" height="2.500" fill="#fff" stroke="#222" stroke-width=".8"/></svg>
<div class="t" style="letter-spacing:0.19px;left:61.9px;top:253px">Connector</div>
<svg style="left:22px;top:270px" width="17" height="15" viewBox="0 0 17 15"><path d="M.5 11.500V1.500H5L6.500 3H13.500V11.500Z" fill="#f5d98a" stroke="#d8b050"/><path d="M1 5H13" stroke="#fbeab8"/><rect x="8.500" y="7.500" width="7" height="6" fill="#f4f6fb" stroke="#7a8098"/><path d="M10 12L12 9.500L13.500 11L14.500 10" fill="none" stroke="#6a7a9a" stroke-width=".8"/></svg>
<div class="t" style="letter-spacing:-0.16px;left:43.3px;top:271px">Smart Objects</div>
<svg style="left:41px;top:288px" width="17" height="16" viewBox="0 0 17 16"><rect x=".5" y="4.500" width="8" height="8" fill="#dfe6f4" stroke="#7a86a8"/><path d="M1 6.500H8M2 8.500H7M2 10.500H7" stroke="#8a96b8"/><path d="M11 2V9M13.500 2V5.500L16 9M13.500 5.500L11 9M10 11.500C10 14 14 14 14 11.500S16 9 16 12" fill="none" stroke="#1a2260" stroke-width="1.300"/></svg>
<div class="t" style="letter-spacing:0.2px;left:62.0px;top:289px">Application Window</div>
<svg style="left:41px;top:306px" width="16" height="16" viewBox="0 0 16 16"><rect x=".5" y="2.500" width="14" height="12" fill="url(#ipw)" stroke="#4a4f60"/><path d="M15.500 4V15.500H2" fill="none" stroke="#8a8f9f"/></svg>
<div class="t" style="letter-spacing:0.09px;left:62.0px;top:307px">Picture Window</div>
<svg style="left:41px;top:324px" width="16" height="16" viewBox="0 0 16 16"><rect x=".5" y="2.500" width="15" height="11" fill="#fff" stroke="#8a8f9f"/><text x="8" y="12" font-family="Liberation Sans,sans-serif" font-size="10.500" font-weight="bold" fill="#1a2260" text-anchor="middle" textLength="12.500" lengthAdjust="spacingAndGlyphs">OCX</text></svg>
<div class="t" style="letter-spacing:0.32px;left:62.0px;top:325px">Control</div>
<svg style="left:41px;top:342px" width="16" height="16" viewBox="0 0 16 16"><rect x=".5" y="2.500" width="15" height="11" fill="#fff" stroke="#8a8f9f"/><text x="8" y="12" font-family="Liberation Sans,sans-serif" font-size="10.500" font-weight="bold" fill="#1a2260" text-anchor="middle" textLength="12.500" lengthAdjust="spacingAndGlyphs">OLE</text></svg>
<div class="t" style="letter-spacing:-0.2px;left:62.0px;top:343px">OLE object</div>
<svg style="left:41px;top:360px" width="16" height="16" viewBox="0 0 16 16"><rect x=".5" y="3.500" width="15" height="10" fill="#e8e8ec" stroke="#222"/><text x="8" y="12.200" font-family="Liberation Sans,sans-serif" font-size="10" font-weight="bold" fill="#000" text-anchor="middle" textLength="12.500" lengthAdjust="spacingAndGlyphs">0.12</text></svg>
<div class="t" style="letter-spacing:-0.04px;left:62.0px;top:361px">I/O Field</div>
<svg style="left:41px;top:378px" width="16" height="16" viewBox="0 0 16 16"><rect x="1.500" y=".5" width="6" height="15" fill="url(#ibar)" stroke="#7a86a8"/><rect x="2" y="11" width="5" height="4" fill="#3aa83a"/><path d="M9.500 2.500H14M9.500 5.500H13M9.500 8.500H14M9.500 11.500H13M9.500 14.500H14" stroke="#5a6078"/></svg>
<div class="t" style="letter-spacing:-0.54px;left:62.0px;top:379px">Bar</div>
<svg style="left:41px;top:396px" width="16" height="16" viewBox="0 0 16 16"><rect x=".5" y="1.500" width="15" height="13" fill="#f8f9fc" stroke="#9aa0b4"/><path d="M2.500 12.500L6 7L8.500 10.500L10.500 8.500L13.500 12.500Z" fill="#6a8ac8"/><circle cx="8" cy="5" r="1.500" fill="#e89a30"/></svg>
<div class="t" style="letter-spacing:-0.05px;left:62.0px;top:397px">Graphic Object</div>
<svg style="left:41px;top:414px" width="16" height="17" viewBox="0 0 16 17"><rect x=".5" y="1.500" width="9" height="11" fill="#f8f9fc" stroke="#9aa0b4"/><path d="M1.500 11.500L4 7.500L6 10L7 9L8.500 11.500Z" fill="#6a8ac8"/><circle cx="5" cy="5" r="1.500" fill="#e89a30"/><rect x="10.500" y="1" width="5" height="4" fill="#222"/><rect x="10.500" y="6.500" width="5" height="4" fill="#222"/><path d="M9 12.500H16L12.500 16.500Z" fill="#222"/></svg>
<div class="t" style="letter-spacing:-0.23px;left:62.0px;top:415px">Status Display</div>
<svg style="left:41px;top:432px" width="16" height="16" viewBox="0 0 16 16"><rect x=".5" y="3.500" width="15" height="9" fill="#fff" stroke="#555"/><text x="5" y="10.800" font-family="Liberation Sans,sans-serif" font-size="6.500" font-weight="bold" fill="#000" text-anchor="middle">ID</text><rect x="9" y="4" width="6.500" height="8" fill="#333"/><path d="M10 6.500H14.500L12.200 10Z" fill="#fff"/></svg>
<div class="t" style="letter-spacing:-0.09px;left:62.0px;top:433px">Text List</div>
<svg style="left:41px;top:450px" width="16" height="16" viewBox="0 0 16 16"><rect x=".5" y=".5" width="15" height="15" fill="#fff" stroke="#8a8f9f"/><text x="5" y="7.500" font-family="Liberation Sans,sans-serif" font-size="7.500" font-weight="bold" fill="#000" text-anchor="middle">A</text><text x="5" y="14.500" font-family="Liberation Sans,sans-serif" font-size="7.500" font-weight="bold" fill="#000" text-anchor="middle">A</text><rect x="9.500" y="1.500" width="5" height="5" fill="#333"/><rect x="9.500" y="9" width="5" height="5.500" fill="#333"/><path d="M10.500 3.500H13.500M10.500 5H13.500" stroke="#fff" stroke-width=".8"/><path d="M10.300 10.500H13.700L12 13Z" fill="#fff"/></svg>
<div class="t" style="letter-spacing:0.17px;left:62.0px;top:451px">Multiple row text</div>
<svg style="left:41px;top:468px" width="16" height="16" viewBox="0 0 16 16"><rect x=".5" y="1.500" width="15" height="13" fill="#f4f6fb" stroke="#9aa0b4"/><rect x="9" y="2" width="6.500" height="12" fill="#333"/><path d="M10 6H14.500L12.200 9.500Z" fill="#fff"/></svg>
<div class="t" style="letter-spacing:0.01px;left:62.0px;top:469px">Combo Box</div>
</div></div>
<!-- right tree scrollbar -->
<div class="a" style="left:1038px;top:127px;width:16px;height:484px;background:#f0f0f0"></div>
<div class="a" style="left:1038px;top:144px;width:15px;height:252px;background:#cdcdcd"></div>
<svg style="left:1041px;top:132px" width="9" height="6" viewBox="0 0 9 6"><path d="M1.200 5.200L4.500 1.900L7.800 5.200" fill="none" stroke="#505050" stroke-width="1.900"/></svg>
<svg style="left:1041px;top:598px" width="9" height="6" viewBox="0 0 9 6"><path d="M1.200 .8L4.500 4.100L7.800 .8" fill="none" stroke="#505050" stroke-width="1.900"/></svg>
<!-- right bottom tabs -->
<div class="a" style="left:862px;top:613px;width:48px;height:20px;background:#fbfbfe"></div>
<div class="a btab" style="left:910px;top:614px;width:49px;height:19px"></div>
<div class="a btab" style="left:958px;top:614px;width:49px;height:19px"></div>
<div class="a btab" style="left:1006px;top:614px;width:49px;height:19px"></div>
<svg style="left:865px;top:615px" width="17" height="16" viewBox="0 0 17 16"><circle cx="9.500" cy="6.500" r="6" fill="#7a9fe0" opacity=".85"/><text x="6.500" y="15" font-family="Liberation Sans,sans-serif" font-size="15" font-weight="bold" fill="#10135c" text-anchor="middle">A</text></svg>
<div class="t" style="letter-spacing:-0.02px;left:882.2px;top:617px">St...</div>
<svg style="left:913px;top:615px" width="16" height="15" viewBox="0 0 16 15"><rect x=".5" y=".5" width="15" height="14" fill="#f4f4f8" stroke="#7a86a8"/><rect x="1" y="1" width="14" height="2.500" fill="#4a6ac8"/><circle cx="8" cy="7.500" r="2" fill="#3a7ad8"/><rect x="4" y="9" width="4" height="4" fill="#3aa83a"/><circle cx="10.500" cy="11" r="2" fill="#e86a30"/></svg>
<div class="t bt" style="letter-spacing:-0.08px;left:930.9px;top:617px">Co...</div>
<svg style="left:962px;top:617px" width="15" height="12" viewBox="0 0 15 12"><path d="M0 1.500H3M5 1.500H9M11 1.500H14" stroke="#10135c" stroke-width="1.600"/><path d="M0 6.500H14M0 11H14" stroke="#10135c" stroke-width="2"/></svg>
<div class="t bt" style="letter-spacing:-0.19px;left:978.6px;top:617px">St...</div>
<svg style="left:1009px;top:615px" width="16" height="16" viewBox="0 0 16 16"><path d="M0 15L6 3L8 6L5 15Z" fill="#3f9c9c"/><path d="M6 15L11 1L13 1L13 15L11 15L11 8L9 11L8 15Z" fill="#3a4a5a"/><path d="M3 12L10 9L10 10.500L3 14Z" fill="#5bb"/></svg>
<div class="t bt" style="letter-spacing:-0.04px;left:1026.4px;top:617px">Pr...</div>
<!-- watermark -->
<div id="wm" class="a" style="left:140px;top:367px;height:120px;line-height:120px;white-space:nowrap;font-family:'Liberation Serif',serif;font-weight:bold;font-size:112px;color:rgba(236,218,190,.23);text-shadow:3px 2px 0 rgba(212,178,138,.16);transform-origin:0 76%;transform:rotate(-13.700deg) scaleX(.645) skewX(-14deg);pointer-events:none">www.plc-hmi-scadas.com</div>
<div class="a" style="left:0;top:0;width:1px;height:682px;background:#1883d7"></div>
<div class="a" style="left:1059px;top:0;width:1px;height:682px;background:#1883d7"></div>
<div class="a" style="left:1060px;top:0;width:1px;height:682px;background:#fff"></div>
</div>
</body></html>
